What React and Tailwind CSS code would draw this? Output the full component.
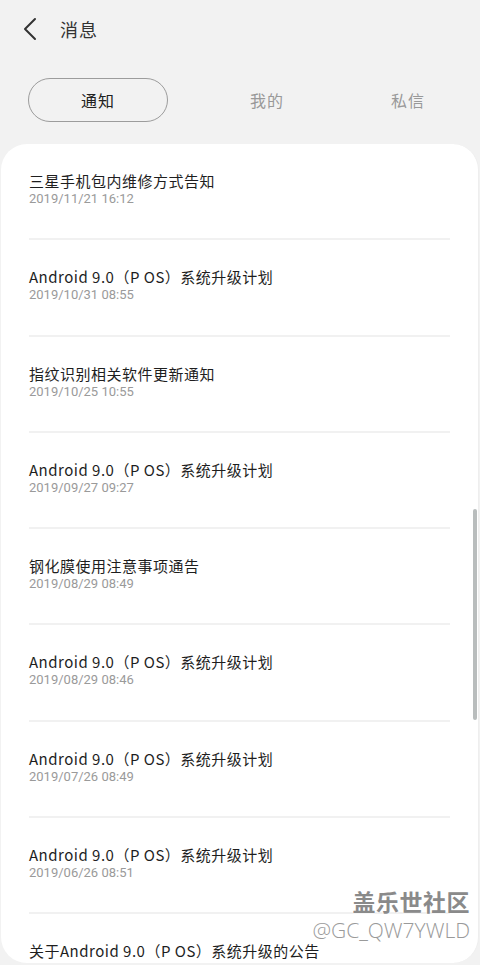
import React from "react";

const items = [
  ["三星手机包内维修方式告知", "2019/11/21 16:12"],
  ["Android 9.0（P OS）系统升级计划", "2019/10/31 08:55"],
  ["指纹识别相关软件更新通知", "2019/10/25 10:55"],
  ["Android 9.0（P OS）系统升级计划", "2019/09/27 09:27"],
  ["钢化膜使用注意事项通告", "2019/08/29 08:49"],
  ["Android 9.0（P OS）系统升级计划", "2019/08/29 08:46"],
  ["Android 9.0（P OS）系统升级计划", "2019/07/26 08:49"],
  ["Android 9.0（P OS）系统升级计划", "2019/06/26 08:51"],
  ["关于Android 9.0（P OS）系统升级的公告", null],
];

const cjk = { fontFamily: '"Noto Sans CJK SC", "Noto Sans", sans-serif' };

export default function App() {
  return (
    <div className="w-[480px] h-[965px] bg-[#f2f2f2] flex flex-col overflow-hidden relative" style={cjk}>
      {/* header */}
      <div className="h-[58px] flex items-center shrink-0">
        <div className="w-[60px] flex items-center pl-[22px]">
          <svg width="16" height="24" viewBox="0 0 16 24">
            <path d="M13 2 L3 12 L13 22" fill="none" stroke="#333" strokeWidth="2" strokeLinecap="round" strokeLinejoin="round" />
          </svg>
        </div>
        <span className="text-[18px] leading-[24px] text-[#333] tracking-[1px]">消息</span>
      </div>
      {/* tabs */}
      <div className="h-[86px] flex items-start pt-[20px] shrink-0">
        <div className="ml-[28px] w-[140px] h-[44px] rounded-full border-[1.5px] border-[#9c9c9c] flex items-center justify-center text-[16px] text-[#222] tracking-[1px]">
          通知
        </div>
        <div className="w-[198px] h-[44px] flex items-center justify-center text-[16px] text-[#999] tracking-[1px]">
          我的
        </div>
        <div className="w-[84px] h-[44px] flex items-center justify-center text-[16px] text-[#999] tracking-[1px]">
          私信
        </div>
      </div>
      {/* card */}
      <div className="mx-px h-[819px] bg-white rounded-[26px] overflow-hidden relative border-r border-[#eeeeee]">
        <div className="flex flex-col px-[28px]">
          {items.map(([t, d], i) => (
            <div key={i} className="pt-[27px] pb-[31.25px] border-b-2 border-[#f1f1f1] flex flex-col">
              <span className="text-[15px] leading-[20px] text-[#1e1e1e] tracking-[0.5px] whitespace-nowrap">{t}</span>
              {d && (
                <span className="text-[13px] leading-[16px] text-[#9a9a9a]" style={{ fontFamily: 'Roboto, "Liberation Sans", sans-serif' }}>{d}</span>
              )}
            </div>
          ))}
        </div>
        <div className="absolute right-[1px] top-[365px] w-[4px] h-[211px] rounded-full bg-[#b9bdbd]" />
      </div>
      {/* watermark */}
      <div className="absolute right-[10px] top-[886px] flex flex-col items-end pointer-events-none">
        <span
          className="text-[23px] leading-[31px] font-bold text-[#8a8a8a] tracking-[0.5px]"
          style={{ textShadow: "0 0 2px #fff, 0 0 2px #fff" }}
        >
          盖乐世社区
        </span>
        <span
          className="text-[21px] leading-[26px] text-[#9a9a9a] font-light"
          style={{ fontFamily: '"Open Sans", "Noto Sans", sans-serif', textShadow: "0 0 2px #fff" }}
        >
          @GC_QW7YWLD
        </span>
      </div>
    </div>
  );
}
